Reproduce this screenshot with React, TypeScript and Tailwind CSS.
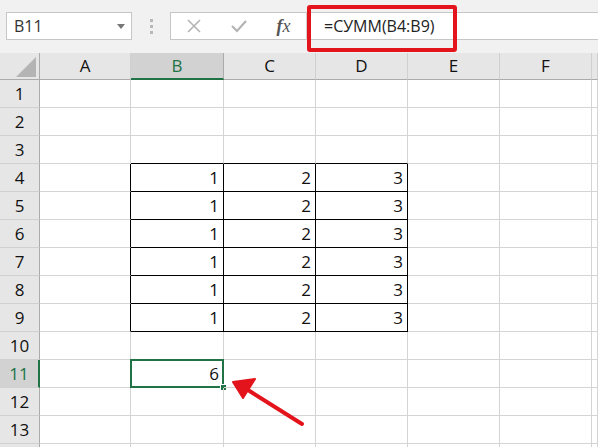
import React from 'react';

const cols = ['A', 'B', 'C', 'D', 'E', 'F', ''];
const rows = Array.from({ length: 14 }, (_, i) => i + 1);

const values: Record<string, string> = {};
for (let r = 4; r <= 9; r++) {
    values[`B${r}`] = '1';
    values[`C${r}`] = '2';
    values[`D${r}`] = '3';
}
values['B11'] = '6';

const inTable = (c: string, r: number) => ['B', 'C', 'D'].includes(c) && r >= 4 && r <= 9;

const font = { fontFamily: '"Open Sans", "Noto Sans", sans-serif' };

const Cell: React.FC<{ col: string; row: number }> = ({ col, row }) => {
    const idx = cols.indexOf(col);
    const next = cols[idx + 1];
    const rightBlack = inTable(col, row) || (next !== undefined && inTable(next, row));
    const bottomBlack = inTable(col, row) || inTable(col, row + 1);
    const selected = col === 'B' && row === 11;
    return (
        <div
            className={`relative flex items-center justify-end pr-[4px] text-[17px] text-[#111] border-r border-b ${rightBlack ? 'border-r-black' : 'border-r-[#d4d4d4]'} ${bottomBlack ? 'border-b-black' : 'border-b-[#d4d4d4]'}`}
        >
            {values[`${col}${row}`]}
            {selected && (
                <>
                    <div className="absolute -left-[1px] -top-[1px] -right-[1px] -bottom-[1px] border-2 border-[#217346]" />
                    <div className="absolute -right-[4px] -bottom-[4px] w-[7px] h-[7px] bg-[#217346] border border-white" />
                </>
            )}
        </div>
    );
};

const App: React.FC = () => {
    return (
        <div className="relative w-[598px] h-[447px] overflow-hidden bg-white select-none" style={font}>
            {/* toolbar */}
            <div className="h-[53px] bg-[#f1f1f1] flex items-start pt-[12px]">
                <div className="ml-[6px] w-[126px] h-[28px] bg-white border border-[#c6c6c6] flex items-center justify-between pl-[7px] pr-[6px]">
                    <span className="text-[16px] text-[#333]">B11</span>
                    <svg width="8" height="5" viewBox="0 0 8 5">
                        <path d="M0 0 L8 0 L4 5 Z" fill="#777" />
                    </svg>
                </div>
                <div className="w-[38px] h-[28px] flex flex-col items-center justify-center gap-[3px]">
                    <span className="w-[3px] h-[3px] bg-[#b8b8b8]" />
                    <span className="w-[3px] h-[3px] bg-[#b8b8b8]" />
                    <span className="w-[3px] h-[3px] bg-[#b8b8b8]" />
                </div>
                <div className="flex-1 h-[28px] bg-white border border-r-0 border-[#c6c6c6] flex items-center">
                    <div className="w-[45px] flex justify-center">
                        <svg width="14" height="14" viewBox="0 0 14 14">
                            <path d="M1 1 L13 13 M13 1 L1 13" stroke="#b4b4b4" strokeWidth="1.6" />
                        </svg>
                    </div>
                    <div className="w-[45px] flex justify-center">
                        <svg width="16" height="14" viewBox="0 0 16 14">
                            <path d="M1 7 L6 12 L15 2" stroke="#b4b4b4" strokeWidth="2.2" fill="none" />
                        </svg>
                    </div>
                    <div className="w-[45px] flex justify-center">
                        <span className="text-[18px] italic text-[#555]" style={{ fontFamily: '"Liberation Serif", serif' }}>
                            <span className="font-bold">f</span>x
                        </span>
                    </div>
                    <div className="w-[1px] h-[28px] bg-[#d0d0d0]" />
                    <span className="ml-[17px] text-[16px] text-[#222]">=СУММ(B4:B9)</span>
                </div>
            </div>

            {/* grid */}
            <div className="grid grid-cols-[40px_91px_93px_92px_92px_92px_92px_1fr] grid-rows-[27px_repeat(14,28px)]">
                <div className="relative bg-[#e6e6e6] border-r border-b border-[#ababab]">
                    <svg className="absolute left-[16px] top-[4px]" width="20" height="20" viewBox="0 0 20 20">
                        <path d="M20 0 L20 20 L0 20 Z" fill="#b4b4b4" />
                    </svg>
                </div>
                {cols.map((c) =>
                    c === 'B' ? (
                        <div key={c} className="flex items-center justify-center bg-[#d2d2d2] text-[17px] text-[#217346] border-r border-r-[#ababab] border-b-2 border-b-[#217346]">
                            {c}
                        </div>
                    ) : (
                        <div key={c || 'x'} className="flex items-center justify-center bg-[#e6e6e6] text-[17px] text-[#111] border-r border-b border-r-[#d0d0d0] border-b-[#ababab]">
                            {c}
                        </div>
                    )
                )}
                {rows.map((r) => (
                    <React.Fragment key={r}>
                        {r === 11 ? (
                            <div className="flex items-center justify-center bg-[#d2d2d2] text-[17px] text-[#217346] border-r-2 border-r-[#217346] border-b border-b-[#d0d0d0]">
                                {r}
                            </div>
                        ) : (
                            <div className="flex items-center justify-center bg-[#e6e6e6] text-[17px] text-[#111] border-r border-b border-r-[#ababab] border-b-[#d0d0d0]">
                                {r < 14 ? r : ''}
                            </div>
                        )}
                        {cols.map((c) => (
                            <Cell key={c + r} col={c || 'G'} row={r} />
                        ))}
                    </React.Fragment>
                ))}
            </div>

            {/* annotations */}
            <div className="absolute left-[307px] top-[5px] w-[150px] h-[47px] border-4 border-[#e3141c] rounded-[3px]" />
            <svg className="absolute left-0 top-0" width="598" height="447" viewBox="0 0 598 447">
                <path d="M302 424 L248 390" stroke="#e3141c" strokeWidth="4" strokeLinecap="round" />
                <path d="M233 382 L255 379 L243 398 Z" fill="#e3141c" stroke="#e3141c" strokeWidth="2" strokeLinejoin="round" />
            </svg>
        </div>
    );
};

export default App;
